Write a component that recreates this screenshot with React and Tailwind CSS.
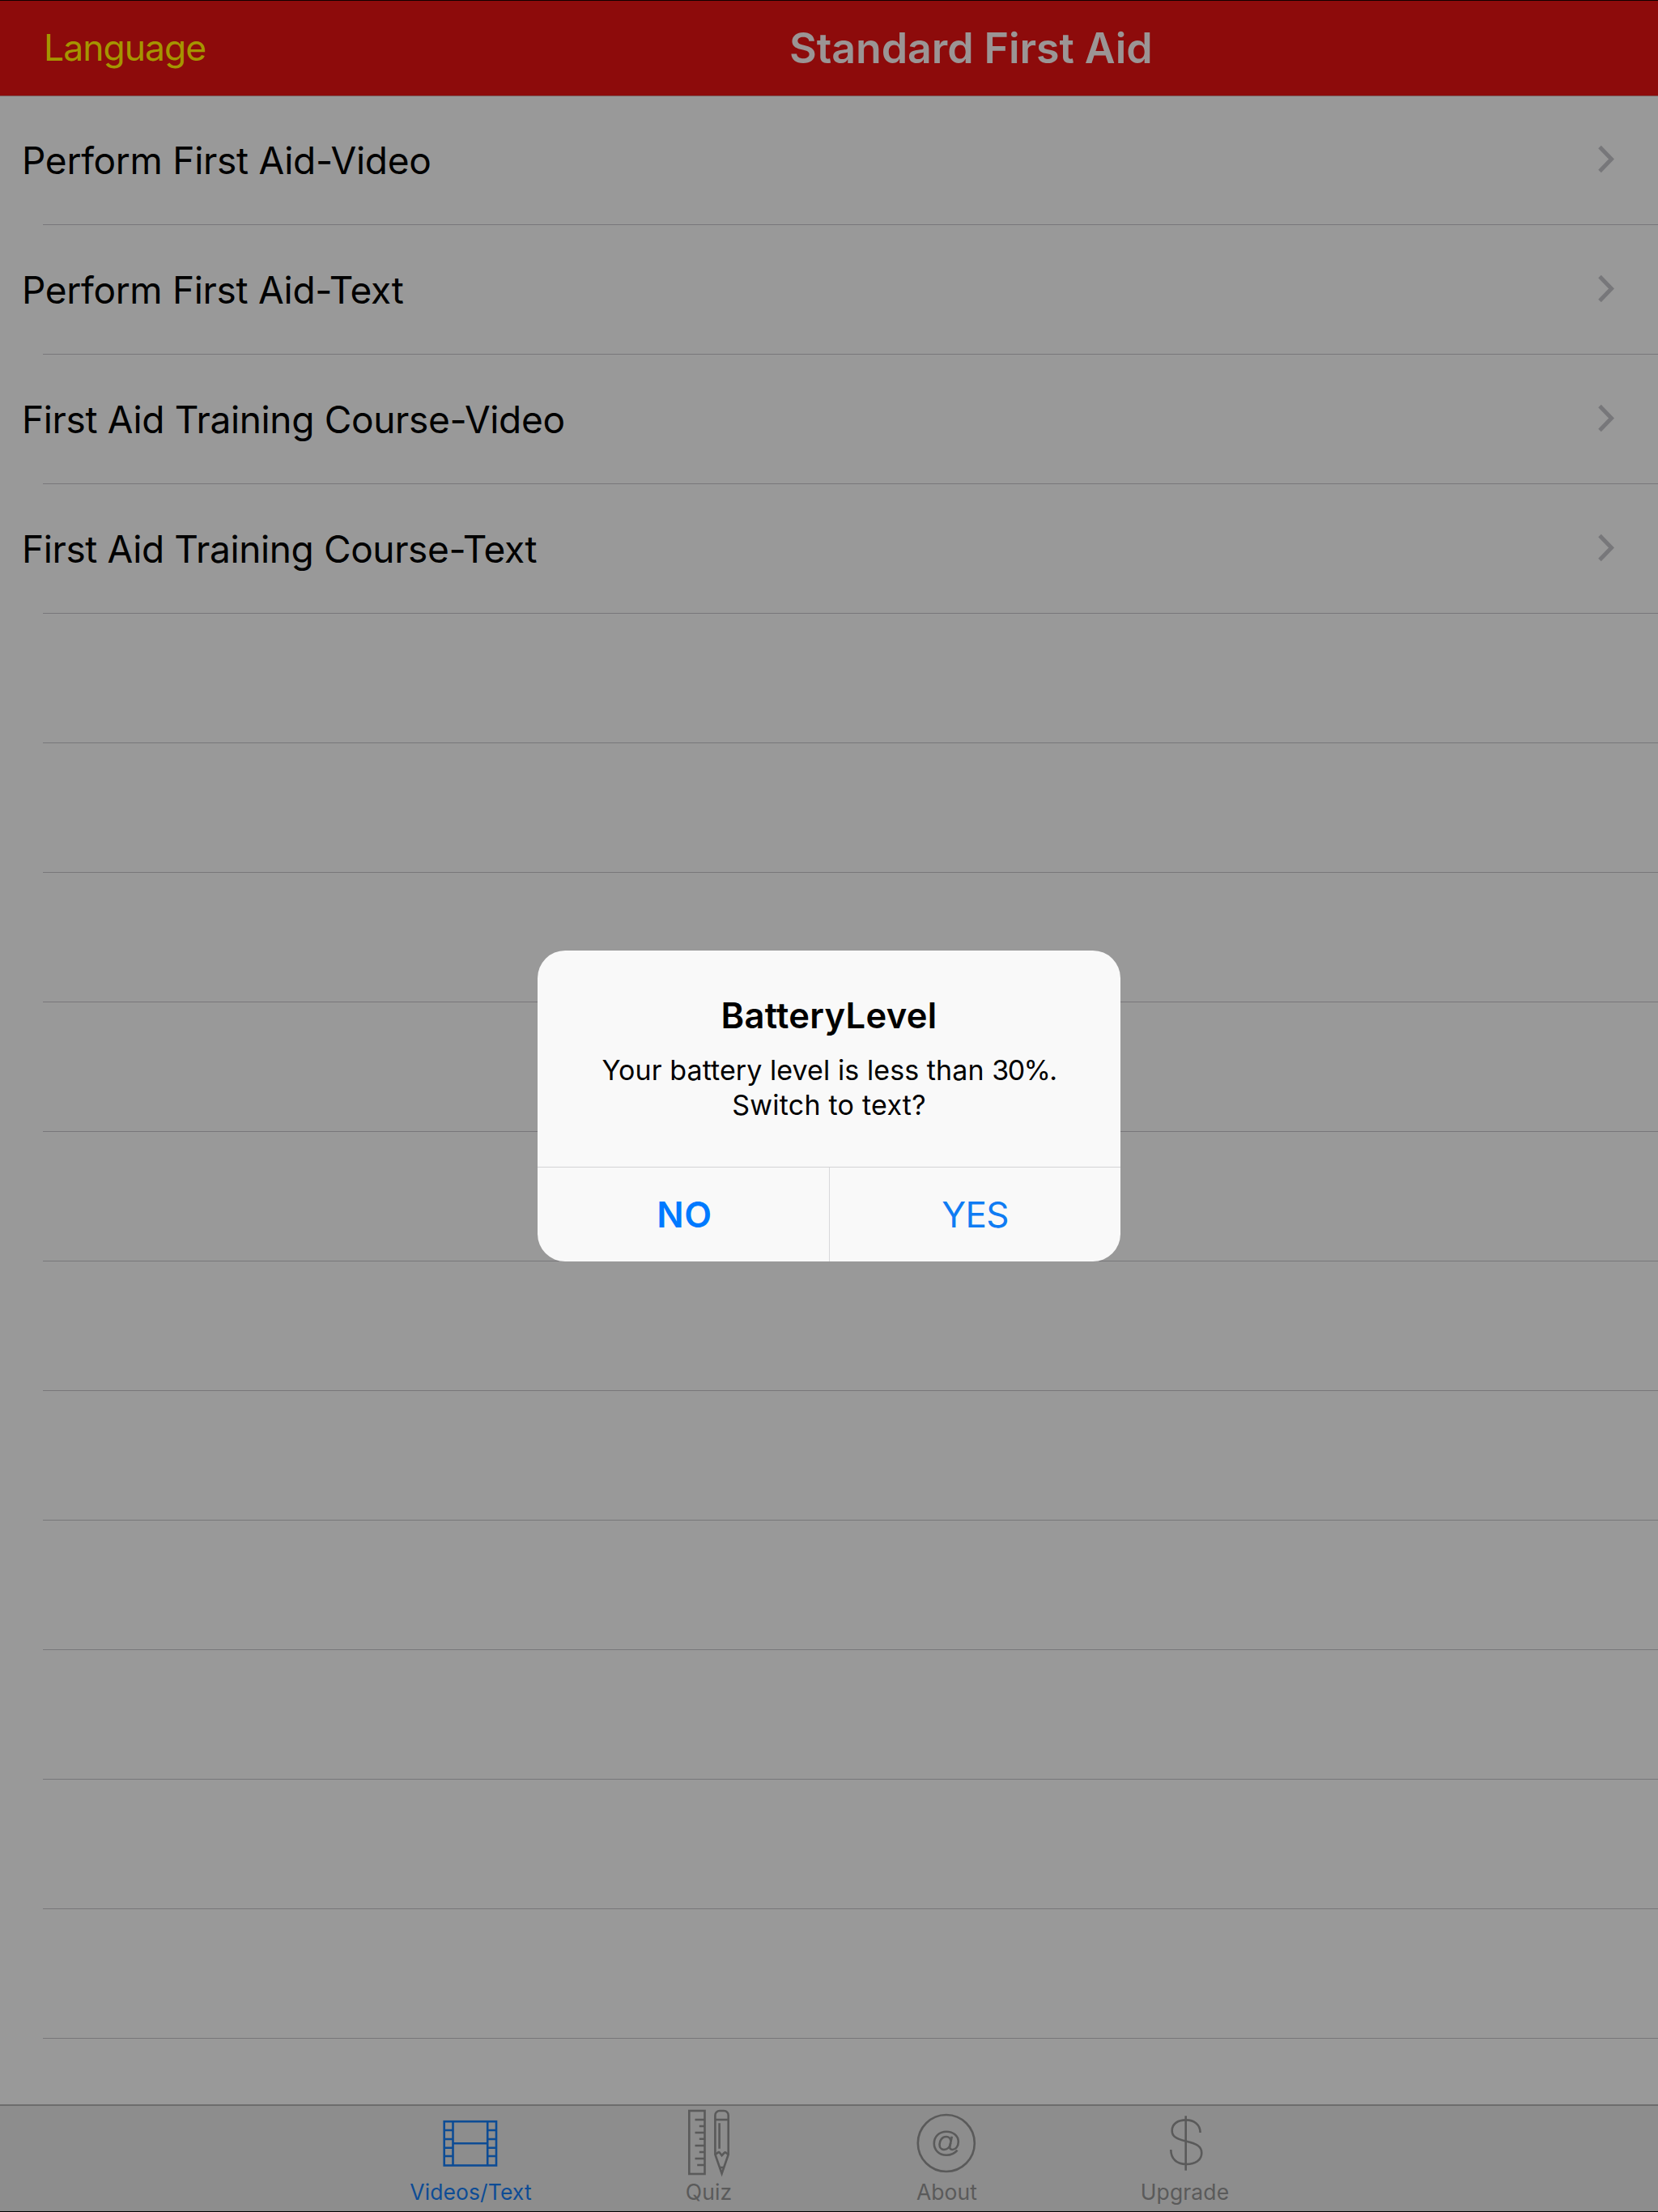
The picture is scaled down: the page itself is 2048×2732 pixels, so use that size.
const LESSONS = [
  { title: "Perform First Aid-Video", tracking: "tracking-[-0.28px]" },
  { title: "Perform First Aid-Text", tracking: "tracking-[-0.32px]" },
  { title: "First Aid Training Course-Video", tracking: "tracking-[-0.34px]" },
  { title: "First Aid Training Course-Text", tracking: "tracking-[-0.38px]" },
];

const EMPTY_ROWS = 11;

function ChevronIcon() {
  return (
    <svg
      className="h-[37px] w-6"
      viewBox="0 0 24 37"
      fill="none"
      stroke="#77777a"
      strokeWidth="5"
    >
      <path d="M3 2.5 17.5 17.5 3 32.5" />
    </svg>
  );
}

function TabIcon({ children }) {
  return (
    <svg
      className="size-[90px]"
      viewBox="0 0 90 90"
      fill="none"
      stroke="currentColor"
      strokeWidth="2.6"
    >
      {children}
    </svg>
  );
}

function FilmIcon() {
  return (
    <TabIcon>
      <rect x="11.7" y="19.2" width="64.3" height="54.3" />
      <path d="M22.5 19v54.5M65.2 19v54.5M22.5 46.3h42.7" />
      <path d="M11.7 30h10.8M11.7 41h10.8M11.7 51.7h10.8M11.7 62h10.8" />
      <path d="M65.2 30h10.8M65.2 41h10.8M65.2 51.7h10.8M65.2 62h10.8" />
    </TabIcon>
  );
}

function RulerPencilIcon() {
  return (
    <TabIcon>
      <rect x="20.3" y="6" width="19.2" height="78" />
      <path d="M27.5 17h12M32.8 25h6.7M27.5 33h12M32.8 40.7h6.7M27.5 49h12M32.8 57h6.7M27.5 65h12M30.2 73h9.3" />
      <path d="M52.4 60V11.5a5.5 5.5 0 0 1 5.5-5.5h5.3a5.5 5.5 0 0 1 5.5 5.5V60L60.6 83.5Z" />
      <path d="M52.4 17h16.3M57.6 21.3v31.4" />
      <path d="M52.4 60.3 56 57.4q1.2-.6 2.2.6l2.4 3.2 3-3.2q1-1 2.2-.2l2.9 2.5M57.6 76h6" />
    </TabIcon>
  );
}

function AtIcon() {
  return (
    <TabIcon>
      <circle cx="43.8" cy="46" r="35" />
      <path d="M57.5 54.6C54 59 49.5 60.7 44 60.7c-9 0-15.2-6.2-15.2-14.5S35 31.7 44 31.7c8.5 0 14.8 5.3 14.8 12.6 0 6.2-3.8 9.7-7.5 9.7-2.5 0-3.5-1.7-3-4l2.5-12.2" />
      <path d="M49.6 43.5c-.6-3.7-2.8-5.5-5.8-5.5-4.8 0-8.3 4.3-8.3 9.5 0 4 2.3 6.5 5.5 6.5 4 0 7.3-3 8.2-8" />
    </TabIcon>
  );
}

function DollarIcon() {
  return (
    <TabIcon>
      <path d="M45.7 12.3v67.4" />
      <path d="M63.6 33C63.6 23 56 17.4 46 17.4c-10.4 0-17.3 5-17.3 13 0 7 5 10.2 17 13 13 3 19.6 6.3 19.6 14.6 0 8.7-7.5 14-19 14-11.7 0-19-6.5-19-18" />
    </TabIcon>
  );
}

const TABS = [
  { label: "Videos/Text", Icon: FilmIcon, active: true },
  { label: "Quiz", Icon: RulerPencilIcon },
  { label: "About", Icon: AtIcon },
  { label: "Upgrade", Icon: DollarIcon },
];

function Header() {
  return (
    <header className="relative z-10 flex h-[119px] items-center border-t border-b border-t-[#120000] border-b-[#7b6060] bg-[#8d0b0b] pl-[54px]">
      <button className="w-[921px] text-left text-[44.5px] tracking-[-1px] text-[#a59500]">
        Language
      </button>
      <h1 className="text-[52px] font-semibold tracking-[-0.1px] text-[#9b9595]">
        Standard First Aid
      </h1>
    </header>
  );
}

function LessonRow({ title, tracking }) {
  return (
    <li className="h-40 pl-[53px]">
      <div className="flex h-full items-center justify-between border-b border-[#78777a] pr-[51px]">
        {title && (
          <>
            <span className={`-ml-[26px] pt-[2px] text-[46px] text-black ${tracking}`}>
              {title}
            </span>
            <ChevronIcon />
          </>
        )}
      </div>
    </li>
  );
}

function TabBar() {
  return (
    <nav className="flex h-[133px] justify-center border-t-2 border-b border-t-[#6c6c6c] border-b-black bg-[#8d8d8d] pr-[3px]">
      {TABS.map(({ label, Icon, active }) => (
        <button
          key={label}
          className={[
            "flex w-[294px] flex-col items-center",
            active ? "text-[#0d4c95]" : "text-[#5a5a5a]",
          ].join(" ")}
        >
          <Icon />
          <span className="text-[26.5px] leading-8 tracking-[0.1px]">{label}</span>
        </button>
      ))}
    </nav>
  );
}

function BatteryAlert() {
  return (
    <div className="absolute inset-0 z-20 flex items-center justify-center">
      <div
        role="alertdialog"
        className="flex h-[384px] w-[720px] flex-col overflow-hidden rounded-[34px] bg-[#f9f9f9]"
      >
        <div className="flex-1 pt-[54px] text-center text-black">
          <h2 className="text-[43.5px] leading-[52px] font-semibold tracking-[0.3px]">
            BatteryLevel
          </h2>
          <p className="mt-5 text-[34px] leading-[43px]">
            <span className="block tracking-[0.08px]">
              Your battery level is less than <span className="tracking-[-1.6px]">30%.</span>
            </span>
            <span className="block tracking-[0.24px]">Switch to text?</span>
          </p>
        </div>
        <div className="flex h-[117px] border-t border-[#d3d3d5] text-[44px] text-[#007aff]">
          <button className="w-[360px] pl-[3px] font-semibold tracking-[0.6px]">NO</button>
          <button className="flex-1 border-l border-[#d9d9db] tracking-[-0.66px] text-[#0f7cf3]">
            YES
          </button>
        </div>
      </div>
    </div>
  );
}

export default function App() {
  return (
    <div className="relative flex h-[2732px] w-[2048px] flex-col overflow-hidden bg-[#999999] font-['Inter',sans-serif]">
      <Header />
      <ul className="-mt-px flex-1">
        {LESSONS.map((lesson) => (
          <LessonRow key={lesson.title} {...lesson} />
        ))}
        {Array.from({ length: EMPTY_ROWS }, (_, i) => (
          <LessonRow key={i} />
        ))}
      </ul>
      <TabBar />
      <BatteryAlert />
    </div>
  );
}
